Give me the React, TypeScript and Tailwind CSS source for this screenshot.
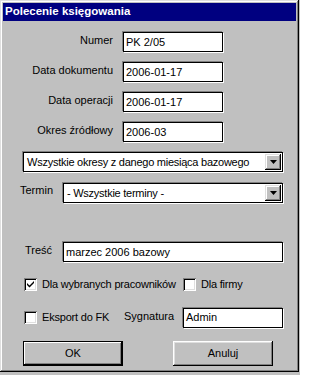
import React from "react";

const font = { fontFamily: '"Liberation Sans", Arial, sans-serif' };

function Edit({ value, width }: { value: string; width: string }) {
  return (
    <div
      className={`${width} h-[20px] bg-white border border-black shadow-[1px_1px_0_#ffffff,-1px_-1px_0_#808080] flex items-center pl-[2px] text-[11px] leading-none text-black`}
    >
      {value}
    </div>
  );
}

function Combo({ value, width }: { value: string; width: string }) {
  return (
    <div
      className={`${width} h-[20px] bg-white border border-black shadow-[1px_1px_0_#ffffff,-1px_-1px_0_#808080] flex items-center justify-between pl-[3px] pr-[1px] text-[11px] leading-none text-black`}
    >
      <span className="tracking-[-0.25px]">{value}</span>
      <div className="w-[16px] h-[16px] bg-[#c0c0c0] shadow-[inset_-1px_-1px_0_#000000,inset_1px_1px_0_#dfdfdf,inset_-2px_-2px_0_#808080,inset_2px_2px_0_#ffffff] flex items-center justify-center">
        <svg width="7" height="4" viewBox="0 0 7 4">
          <path d="M0 0h7L3.5 4z" fill="#000" />
        </svg>
      </div>
    </div>
  );
}

function Check({ checked, label }: { checked?: boolean; label: string }) {
  return (
    <div className="flex items-center">
      <div className="w-[13px] h-[13px] bg-white shadow-[inset_1px_1px_0_#808080,inset_-1px_-1px_0_#ffffff,inset_2px_2px_0_#000000,inset_-2px_-2px_0_#dfdfdf] flex items-center justify-center">
        {checked && (
          <svg width="7" height="7" viewBox="0 0 7 7">
            <path d="M0 2l2.5 2.5L7 0v2L2.5 6.5 0 4z" fill="#000" />
          </svg>
        )}
      </div>
      <span className="ml-[5px] text-[11px] tracking-[-0.2px] text-black">{label}</span>
    </div>
  );
}

function Field({ label, value }: { label: string; value: string }) {
  return (
    <div className="flex items-center">
      <div className="w-[110px] text-right text-[11px] text-black -mt-[3px]">{label}</div>
      <div className="ml-[10px]">
        <Edit value={value} width="w-[100px]" />
      </div>
    </div>
  );
}

export default function App() {
  return (
    <div className="w-[300px] h-[375px] bg-[#c0c0c0]" style={font}>
      <div className="w-[299px] h-[372px] bg-[#c0c0c0] p-[3px] shadow-[inset_-1px_-1px_0_#000000,inset_1px_1px_0_#dfdfdf,inset_-2px_-2px_0_#808080,inset_2px_2px_0_#ffffff]">
        <div className="h-[18px] bg-[#000080] flex items-center pl-[2px] text-white font-bold text-[11.5px]">
          Polecenie księgowania
        </div>

        <div className="flex flex-col gap-[10px] pt-[11px]">
          <Field label="Numer" value="PK 2/05" />
          <Field label="Data dokumentu" value="2006-01-17" />
          <Field label="Data operacji" value="2006-01-17" />
          <Field label="Okres źródłowy" value="2006-03" />
        </div>

        <div className="mt-[10px] ml-[20px]">
          <Combo value="Wszystkie okresy z danego miesiąca bazowego" width="w-[260px]" />
        </div>

        <div className="mt-[11px] flex items-center">
          <span className="w-[60px] pl-[17px] text-[11px] text-black -mt-[6px]">Termin</span>
          <Combo value="- Wszystkie terminy -" width="w-[220px]" />
        </div>

        <div className="mt-[39px] flex items-center">
          <span className="w-[60px] pl-[22px] text-[11px] text-black -mt-[4px]">Treść</span>
          <Edit value="marzec 2006 bazowy" width="w-[220px]" />
        </div>

        <div className="mt-[14px] ml-[21px] flex items-center">
          <div className="w-[159px]">
            <Check checked label="Dla wybranych pracowników" />
          </div>
          <Check label="Dla firmy" />
        </div>

        <div className="mt-[15px] ml-[21px] flex items-center">
          <div className="w-[100px]">
            <Check label="Eksport do FK" />
          </div>
          <span className="w-[59px] text-[11px] text-black -mt-[3px]">Sygnatura</span>
          <Edit value="Admin" width="w-[100px]" />
        </div>

        <div className="mt-[13px] ml-[20px] flex gap-[50px]">
          <button className="w-[100px] h-[25px] border border-black bg-[#c0c0c0] shadow-[inset_-1px_-1px_0_#000000,inset_1px_1px_0_#ffffff,inset_-2px_-2px_0_#808080] text-[11px] text-black">
            OK
          </button>
          <button className="w-[100px] h-[25px] bg-[#c0c0c0] shadow-[inset_-1px_-1px_0_#000000,inset_1px_1px_0_#ffffff,inset_-2px_-2px_0_#808080,inset_2px_2px_0_#dfdfdf] text-[11px] text-black">
            Anuluj
          </button>
        </div>
      </div>
    </div>
  );
}
